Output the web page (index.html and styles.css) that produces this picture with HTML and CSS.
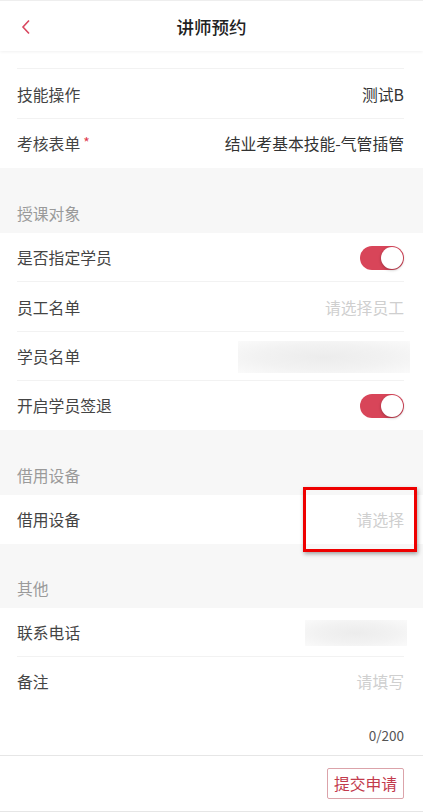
FILE: index.html
```html
<!DOCTYPE html>
<html>
<head>
  <meta charset="UTF-8">
  <meta name="viewport" content="width=device-width, initial-scale=1.0">
  <title>讲师预约</title>
  <link rel="stylesheet" href="styles.css">
</head>
<body>
  <div class="page">
    <header class="topbar">
      <span class="back">
        <svg width="10" height="16" viewBox="0 0 10 16"><path d="M8 1.5 L2 8 L8 14.5" fill="none" stroke="#d9475f" stroke-width="1.6"/></svg>
      </span>
      <h1>讲师预约</h1>
    </header>

    <main class="content">
      <section class="group">
        <div class="row peek"></div>
        <div class="row tall"><span class="label">技能操作</span><span class="value">测试B</span></div>
        <div class="row"><span class="label">考核表单<i class="star">*</i></span><span class="value">结业考基本技能-气管插管</span></div>
      </section>

      <div class="group-title">授课对象</div>
      <section class="group">
        <div class="row"><span class="label">是否指定学员</span><span class="switch on"></span></div>
        <div class="row tall"><span class="label">员工名单</span><span class="hint">请选择员工</span></div>
        <div class="row"><span class="label">学员名单</span><span class="blur wide"></span></div>
        <div class="row"><span class="label">开启学员签退</span><span class="switch on"></span></div>
      </section>

      <div class="group-title">借用设备</div>
      <section class="group">
        <div class="row"><span class="label">借用设备</span><span class="hint marked">请选择</span></div>
      </section>

      <div class="group-title short">其他</div>
      <section class="group">
        <div class="row"><span class="label">联系电话</span><span class="blur narrow"></span></div>
        <div class="row note">
          <div class="note-top"><span class="label">备注</span><span class="hint">请填写</span></div>
          <div class="count">0/200</div>
        </div>
      </section>
    </main>

    <footer class="bottombar">
      <button class="submit">提交申请</button>
    </footer>
  </div>
</body>
</html>
```

FILE: styles.css
```css
*{
  box-sizing: border-box;
}
body{
  margin: 0;
  background: #f7f7f7;
  font-family: "Noto Sans CJK SC", "Liberation Sans", sans-serif;
  color: #333;
}
.page{
  height: 812px;
  display: flex;
  flex-direction: column;
  overflow: hidden;
}
.topbar{
  position: relative;
  z-index: 2;
  height: 51px;
  flex: none;
  display: flex;
  align-items: center;
  justify-content: center;
  background: #fff;
  border-top: 1px solid #eee;
  box-shadow: 0 1px 3px rgba(0,0,0,0.06);
}
.topbar h1{
  margin: 0;
  font-size: 17.5px;
  font-weight: 500;
  color: #222;
}
.back{
  position: absolute;
  left: 21px;
  top: 18px;
  display: flex;
}
.content{
  flex: 1;
  overflow: hidden;
}
.group{
  background: #fff;
}
.row{
  position: relative;
  height: 49px;
  padding: 0 19px 0 17px;
  display: flex;
  align-items: center;
  justify-content: space-between;
  font-size: 15.8px;
}
.row::after{
  content: "";
  position: absolute;
  left: 17px;
  right: 19px;
  bottom: 0;
  height: 1px;
  background: #f2f2f2;
}
.row:last-child::after{
  display: none;
}
.row.tall{
  height: 50px;
}
.row.peek{
  height: 18px;
}
.label{
  color: #444;
}
.value{
  color: #333;
}
.star{
  font-style: normal;
  color: #e03a4e;
  font-size: 14px;
  margin-left: 3px;
  vertical-align: 2px;
}
.hint{
  color: #cfcfcf;
}
.marked{
  position: relative;
}
.marked::before{
  content: "";
  position: absolute;
  left: -54px;
  right: -13px;
  top: -21px;
  bottom: -21px;
  border: 3px solid #ee0000;
  box-shadow: 1px 2px 4px rgba(0,0,0,0.35);
}
.group-title{
  height: 65px;
  padding: 0 17px 8px;
  display: flex;
  align-items: flex-end;
  font-size: 15.8px;
  color: #9a9a9a;
  line-height: 22px;
}
.group-title.short{
  height: 64px;
}
.switch{
  position: relative;
  width: 44px;
  height: 24px;
  border-radius: 12px;
  background: #d84559;
}
.switch.on::after{
  content: "";
  position: absolute;
  right: 1px;
  top: 1px;
  width: 22px;
  height: 22px;
  border-radius: 50%;
  background: #fff;
  box-shadow: 0 1px 3px rgba(0,0,0,0.3);
}
.blur{
  height: 32px;
  background: radial-gradient(ellipse at center, #ececec 0%, #f2f2f2 55%, #fafafa 100%);
}
.blur.wide{
  width: 172px;
  margin-right: -6px;
}
.blur.narrow{
  width: 102px;
  height: 26px;
  margin-right: -3px;
}
.row.note{
  height: 99px;
  flex-direction: column;
  align-items: stretch;
  justify-content: flex-start;
  padding-top: 14px;
}
.note-top{
  display: flex;
  justify-content: space-between;
  line-height: 22px;
}
.count{
  margin-top: 32px;
  text-align: right;
  font-size: 13.5px;
  color: #555;
}
.bottombar{
  height: 57px;
  flex: none;
  display: flex;
  align-items: center;
  justify-content: flex-end;
  padding: 0 19px;
  background: #fff;
  border-top: 1px solid #e6e6e6;
  border-bottom: 1px solid #e6e6e6;
}
.submit{
  width: 77px;
  height: 31px;
  padding: 0;
  background: #fff;
  border: 1px solid #dba3aa;
  border-radius: 2px;
  color: #c23a4c;
  font-family: inherit;
  font-size: 15.8px;
}
```
